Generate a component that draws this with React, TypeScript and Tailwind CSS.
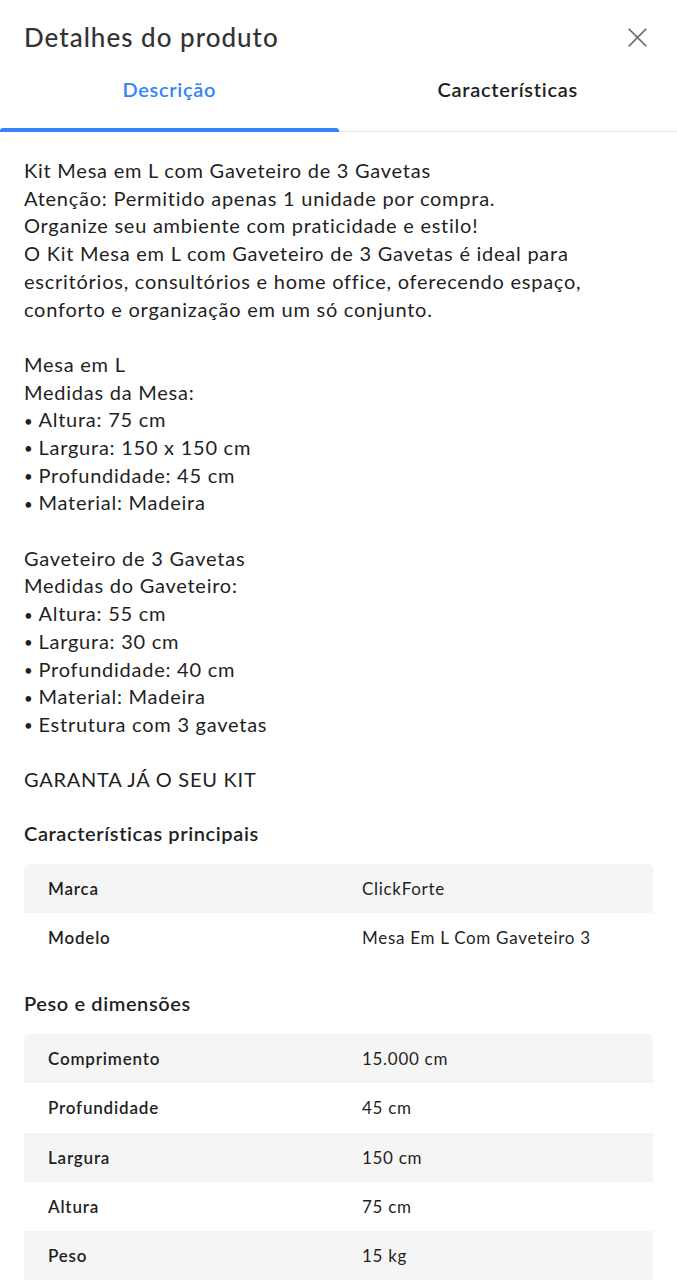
import React from 'react';

const descricao = [
  'Kit Mesa em L com Gaveteiro de 3 Gavetas',
  'Atenção: Permitido apenas 1 unidade por compra.',
  'Organize seu ambiente com praticidade e estilo!',
  'O Kit Mesa em L com Gaveteiro de 3 Gavetas é ideal para escritórios, consultórios e home office, oferecendo espaço, conforto e organização em um só conjunto.',
  '',
  'Mesa em L',
  'Medidas da Mesa:',
  '• Altura: 75 cm',
  '• Largura: 150 x 150 cm',
  '• Profundidade: 45 cm',
  '• Material: Madeira',
  '',
  'Gaveteiro de 3 Gavetas',
  'Medidas do Gaveteiro:',
  '• Altura: 55 cm',
  '• Largura: 30 cm',
  '• Profundidade: 40 cm',
  '• Material: Madeira',
  '• Estrutura com 3 gavetas',
  '',
  'GARANTA JÁ O SEU KIT',
];

const principais = [
  ['Marca', 'ClickForte'],
  ['Modelo', 'Mesa Em L Com Gaveteiro 3'],
];

const dimensoes = [
  ['Comprimento', '15.000 cm'],
  ['Profundidade', '45 cm'],
  ['Largura', '150 cm'],
  ['Altura', '75 cm'],
  ['Peso', '15 kg'],
];

function Tabela({ rows }: { rows: string[][] }) {
  return (
    <div className="rounded-md overflow-hidden shadow-[0_0_2px_rgba(0,0,0,0.06)]">
      {rows.map(([label, valor], i) => (
        <div
          key={label}
          className={`flex items-center h-[49.4px] ${i % 2 === 0 ? 'bg-[#f5f5f5]' : 'bg-white'}`}
        >
          <span className="w-[338px] pl-6 text-[17px] font-semibold tracking-[0.8px] text-[#1f1f1f]">{label}</span>
          <span className="text-[17px] tracking-[0.7px] text-[#1f1f1f]">{valor}</span>
        </div>
      ))}
    </div>
  );
}

export default function App() {
  return (
    <div className="w-[677px] h-[1280px] overflow-hidden bg-white font-['Lato',sans-serif] text-[#1f1f1f]">
      {/* CABEÇALHO */}
      <div className="flex items-center justify-between px-6 pt-[18px] h-[56px]">
        <h1 className="text-[26px] font-medium tracking-[1px] text-[#333]">Detalhes do produto</h1>
        <button className="text-[#666] pr-[5px]">
          <svg width="21" height="21" viewBox="0 0 24 24" fill="none" stroke="currentColor" strokeWidth="2">
            <path d="M2 2l20 20M22 2L2 22" />
          </svg>
        </button>
      </div>

      {/* ABAS */}
      <div className="flex border-b border-[#e6e6e6] mt-[4px]">
        <div className="w-1/2 h-[71px] pb-[14px] flex items-center justify-center relative">
          <span className="text-[20px] font-semibold tracking-[0.7px] text-[#3483fa]">Descrição</span>
          <div className="absolute left-0 right-0 bottom-[-1px] h-[4px] bg-[#3483fa] rounded-t-[3px]" />
        </div>
        <div className="w-1/2 h-[71px] pb-[14px] flex items-center justify-center">
          <span className="text-[20px] font-semibold tracking-[0.7px] text-[#1f1f1f]">Características</span>
        </div>
      </div>

      {/* DESCRIÇÃO */}
      <div className="px-6 pt-[25px] text-[20px] leading-[27.7px] tracking-[0.75px] text-[#1f1f1f] pr-[40px]">
        {descricao.map((linha, i) =>
          linha.startsWith('• ') ? (
            <p key={i} className="h-[27.7px] flex items-center">
              <span className="text-[15px] leading-none mt-[2px]">•</span>
              <span className="ml-[5px]">{linha.slice(2)}</span>
            </p>
          ) : (
            <p key={i}>{linha || '\u00a0'}</p>
          )
        )}
      </div>

      {/* CARACTERÍSTICAS PRINCIPAIS */}
      <div className="px-6 mt-[24px]">
        <h2 className="text-[20px] font-semibold tracking-[0.6px] mb-[16px]">Características principais</h2>
        <Tabela rows={principais} />
      </div>

      {/* PESO E DIMENSÕES */}
      <div className="px-6 mt-[25px]">
        <h2 className="text-[20px] font-semibold tracking-[0.6px] mb-[16px]">Peso e dimensões</h2>
        <Tabela rows={dimensoes} />
      </div>
    </div>
  );
}
